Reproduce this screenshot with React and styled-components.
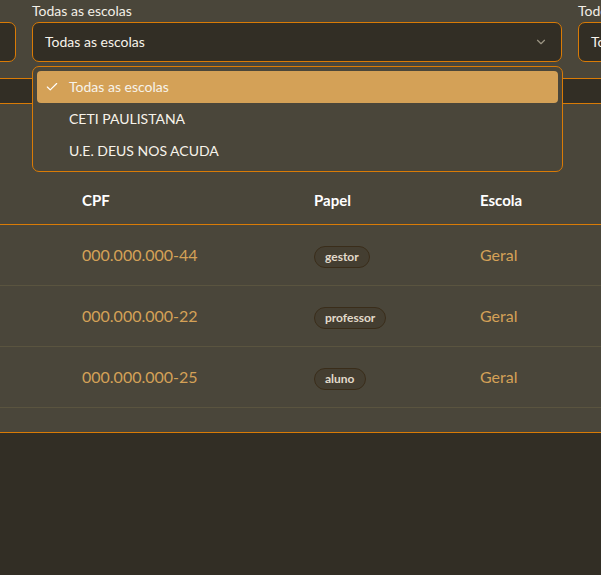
import React from "react";
import styled, { createGlobalStyle } from "styled-components";

const GlobalStyle = createGlobalStyle`
  html, body { margin: 0; padding: 0; }
  body {
    background: #322e25;
    font-family: Lato, "Noto Sans", sans-serif;
    color: #f3efe6;
    overflow: hidden;
  }
`;

const Panel = styled.div`
  background: #4a463a;
  border-bottom: 1px solid #d97b06;
  overflow: hidden;
  position: relative;
`;

const FilterRow = styled.div`
  display: grid;
  grid-template-columns: repeat(3, 530px);
  column-gap: 16px;
  margin-left: -514px;
  padding-top: 2px;
`;

const FilterGroup = styled.div`
  display: flex;
  flex-direction: column;
  position: relative;
`;

const Label = styled.label`
  font-size: 14px;
  line-height: 18px;
  margin-bottom: 2px;
  color: #f3efe6;
`;

const SelectBox = styled.div`
  box-sizing: border-box;
  height: 40px;
  border: 1px solid #d97b06;
  border-radius: 7px;
  background: #322e25;
  display: flex;
  align-items: center;
  justify-content: space-between;
  padding: 0 13px 1px 12px;
  font-size: 14px;
  color: #f7f3ea;
`;

const Chevron = styled.svg`
  width: 14px;
  height: 14px;
  margin-top: 1px;
  color: #9c9584;
`;

const Menu = styled.div`
  position: absolute;
  z-index: 5;
  top: calc(100% + 4px);
  left: 0;
  right: -1px;
  box-sizing: border-box;
  border: 1px solid #d97b06;
  border-radius: 7px;
  background: #4a463a;
  padding: 4px;
`;

const MenuItem = styled.div`
  display: flex;
  align-items: center;
  box-sizing: border-box;
  height: 32px;
  padding: 0 0 2px 32px;
  border-radius: 4px;
  position: relative;
  font-size: 14px;
  color: #f7f3ea;
  background: ${(p) => (p.$active ? "#d4a157" : "transparent")};
`;

const Check = styled.svg`
  position: absolute;
  left: 8px;
  top: 9px;
  width: 14px;
  height: 14px;
`;

const Strip = styled.div`
  margin-top: 16px;
  height: 24px;
  background: #322e25;
  border-top: 1px solid #d97b06;
  border-bottom: 1px solid #d97b06;
`;

const Table = styled.div`
  margin-top: 72px;
  padding-bottom: 24px;
`;

const Row = styled.div`
  display: grid;
  grid-template-columns: 82px 232px 166px 1fr;
  align-items: center;
  height: ${(p) => (p.$header ? "48px" : "60px")};
  border-bottom: 1px solid ${(p) => (p.$header ? "#d97b06" : "#5a543f")};
`;

const HeadCell = styled.div`
  font-size: 15px;
  font-weight: 700;
  color: #ffffff;
`;

const Cell = styled.div`
  font-size: 16px;
  padding-bottom: 2px;
  color: #d4a157;
`;

const Badge = styled.span`
  display: inline-flex;
  align-items: center;
  height: 22px;
  box-sizing: border-box;
  padding: 0 10px 1px;
  border: 1px solid #3a2d1a;
  border-radius: 11px;
  background: #443e31;
  font-size: 12px;
  font-weight: 700;
  color: #e2dacb;
  margin-top: 3px;
`;

const rows = [
  { cpf: "000.000.000-44", papel: "gestor", escola: "Geral" },
  { cpf: "000.000.000-22", papel: "professor", escola: "Geral" },
  { cpf: "000.000.000-25", papel: "aluno", escola: "Geral" },
];

const options = ["Todas as escolas", "CETI PAULISTANA", "U.E. DEUS NOS ACUDA"];

export default function App() {
  return (
    <>
      <GlobalStyle />
      <Panel>
        <FilterRow>
          <FilterGroup>
            <Label>Todos</Label>
            <SelectBox>Todos</SelectBox>
          </FilterGroup>
          <FilterGroup>
            <Label>Todas as escolas</Label>
            <SelectBox>
              <span>Todas as escolas</span>
              <Chevron viewBox="0 0 24 24" fill="none" stroke="currentColor" strokeWidth="2" strokeLinecap="round" strokeLinejoin="round">
                <path d="M6 9l6 6 6-6" />
              </Chevron>
            </SelectBox>
            <Menu>
              {options.map((o, i) => (
                <MenuItem key={o} $active={i === 0}>
                  {i === 0 && (
                    <Check viewBox="0 0 24 24" fill="none" stroke="#ffffff" strokeWidth="2" strokeLinecap="round" strokeLinejoin="round">
                      <path d="M20 6L9 17l-5-5" />
                    </Check>
                  )}
                  {o}
                </MenuItem>
              ))}
            </Menu>
          </FilterGroup>
          <FilterGroup>
            <Label>Todos os papéis</Label>
            <SelectBox>Todos os papéis</SelectBox>
          </FilterGroup>
        </FilterRow>
        <Strip />
        <Table>
          <Row $header>
            <div />
            <HeadCell>CPF</HeadCell>
            <HeadCell>Papel</HeadCell>
            <HeadCell>Escola</HeadCell>
          </Row>
          {rows.map((r) => (
            <Row key={r.cpf}>
              <div />
              <Cell>{r.cpf}</Cell>
              <div>
                <Badge>{r.papel}</Badge>
              </div>
              <Cell>{r.escola}</Cell>
            </Row>
          ))}
        </Table>
      </Panel>
    </>
  );
}
